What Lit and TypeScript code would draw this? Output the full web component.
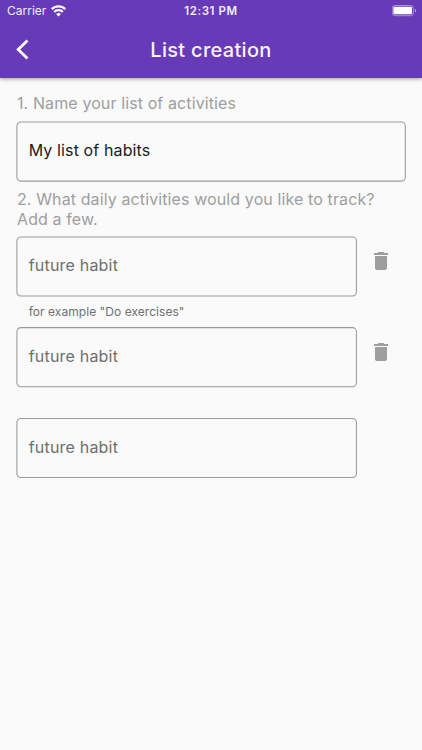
import { LitElement, html, css, nothing } from "lit";
import { customElement, property } from "lit/decorators.js";

@customElement("status-bar")
class StatusBar extends LitElement {
  static styles = css`
    :host { display: grid; grid-template-columns: 1fr auto 1fr; align-items: center; height: 22px; color: #f2ecfb; }
    .left { display: flex; align-items: center; gap: 5px; padding-left: 7px; }
    .carrier { font-size: 12px; line-height: 22px; letter-spacing: 0; }
    .time { font-size: 11.5px; line-height: 22px; font-weight: 600; letter-spacing: 0.6px; }
    .right { display: flex; justify-content: flex-end; padding-right: 4px; }
    svg { display: block; }
  `;
  render() {
    return html`
      <div class="left">
        <span class="carrier">Carrier</span>
        <svg width="15" height="12" viewBox="0 0 15 12" fill="none" stroke="#fff" stroke-width="2.3">
          <path d="M0.8 4.1A9.4 9.4 0 0 1 14.2 4.1" />
          <path d="M3.2 7A5.9 5.9 0 0 1 11.8 7" />
          <path d="M7.5 11.6L5.1 9.1A3.4 3.4 0 0 1 9.9 9.1Z" fill="#fff" stroke="none" />
        </svg>
      </div>
      <span class="time">12:31 PM</span>
      <div class="right">
        <svg width="26" height="12" viewBox="0 0 26 12">
          <rect x="0.2" y="0.5" width="21.4" height="10.2" rx="3" fill="none" stroke="#fff" stroke-opacity=".45" />
          <rect x="1.4" y="1.8" width="18.6" height="7.4" rx="1.3" fill="#fff" />
          <path d="M23 3.8a2 2 0 0 1 0 3.6z" fill="#fff" fill-opacity=".55" />
        </svg>
      </div>
    `;
  }
}

@customElement("outlined-field")
class OutlinedField extends LitElement {
  @property() value = "";
  @property() placeholder = "";
  @property({ type: Number }) width = 340;
  @property({ type: Number }) inset = 1;
  static styles = css`
    :host { display: block; }
    .box { position: relative; box-sizing: border-box; height: 60px; display: flex; align-items: center; padding: 0 12.7px 2px; font-size: 16px; line-height: 20px; letter-spacing: 0.2px; color: #6e6e6e; }
    .filled { color: #202020; letter-spacing: 0.12px; }
    .outline { position: absolute; inset: 0; width: 100%; height: 100%; overflow: visible; }
  `;
  render() {
    return html`<div class="box ${this.value ? "filled" : ""}">
      <svg class="outline" fill="none" stroke="#9a9a9a" stroke-width="1.05">
        <rect x="0.9" y=${this.inset} width=${this.width} height="59.1" rx="4" />
      </svg>
      <span>${this.value || this.placeholder}</span>
    </div>`;
  }
}

@customElement("habit-row")
class HabitRow extends LitElement {
  @property() helper = "";
  @property({ type: Boolean }) removable = false;
  @property({ type: Number }) inset = 1;
  static styles = css`
    :host { display: flex; height: 91px; }
    .main { width: 341px; }
    .helper { padding: 8px 12.7px 0; font-size: 12px; line-height: 15px; letter-spacing: 0.05px; color: #707070; }
    .action { display: flex; justify-content: center; width: 48px; padding-top: 13px; }
    svg { display: block; width: 24px; height: 24px; }
  `;
  render() {
    return html`
      <div class="main">
        <outlined-field placeholder="future habit" .width=${339.5} .inset=${this.inset}></outlined-field>
        ${this.helper ? html`<div class="helper">${this.helper}</div>` : nothing}
      </div>
      ${this.removable
        ? html`<div class="action">
            <svg viewBox="0 0 24 24" fill="#9e9e9e"><path d="M6 19c0 1.1.9 2 2 2h8c1.1 0 2-.9 2-2V7H6v12zM19 4h-3.5l-1-1h-5l-1 1H5v2h14V4z" /></svg>
          </div>`
        : nothing}
    `;
  }
}

@customElement("app-root")
class AppRoot extends LitElement {
  rows = [
    { helper: 'for example "Do exercises"', removable: true, inset: 0.9 },
    { helper: "", removable: true, inset: 0.6 },
    { helper: "", removable: false, inset: 0.4 },
  ];
  static styles = css`
    :host { display: block; height: 750px; overflow: hidden; background: #fafafa; font-family: Inter, "Liberation Sans", sans-serif; }
    header { height: 77.5px; background: #673ab7; box-shadow: 0 1px 4px rgba(0, 0, 0, 0.38); }
    .bar { display: grid; grid-template-columns: 48px 1fr 48px; align-items: center; height: 55px; color: #f7f2fd; }
    .back { display: block; margin-left: 15px; }
    h1 { margin: 0; text-align: center; font-size: 20px; line-height: 24px; font-weight: 500; letter-spacing: 0.3px; }
    main { padding: 16.5px 16px 0; }
    .label { margin: 0; padding-left: 1px; font-size: 16px; line-height: 19px; letter-spacing: 0.11px; color: #9e9e9e; }
    .question { margin: 9px 0 7px; }
    .question span { display: block; padding-top: 1px; }
    .name { margin-top: 8px; }
  `;
  render() {
    return html`
      <header>
        <status-bar></status-bar>
        <div class="bar">
          <svg class="back" width="16" height="22" viewBox="0 0 16 22" fill="none" stroke="#fff" stroke-width="2.8"><path d="M12.5 1.4L3.2 10.5L12.5 19.6" /></svg>
          <h1>List creation</h1>
        </div>
      </header>
      <main>
        <p class="label">1. Name your list of activities</p>
        <outlined-field class="name" value="My list of habits" .width=${388.4}></outlined-field>
        <p class="label question">2. What daily activities would you like to track?<span>Add a few.</span></p>
        ${this.rows.map((r) => html`<habit-row .helper=${r.helper} .removable=${r.removable} .inset=${r.inset}></habit-row>`)}
      </main>
    `;
  }
}
